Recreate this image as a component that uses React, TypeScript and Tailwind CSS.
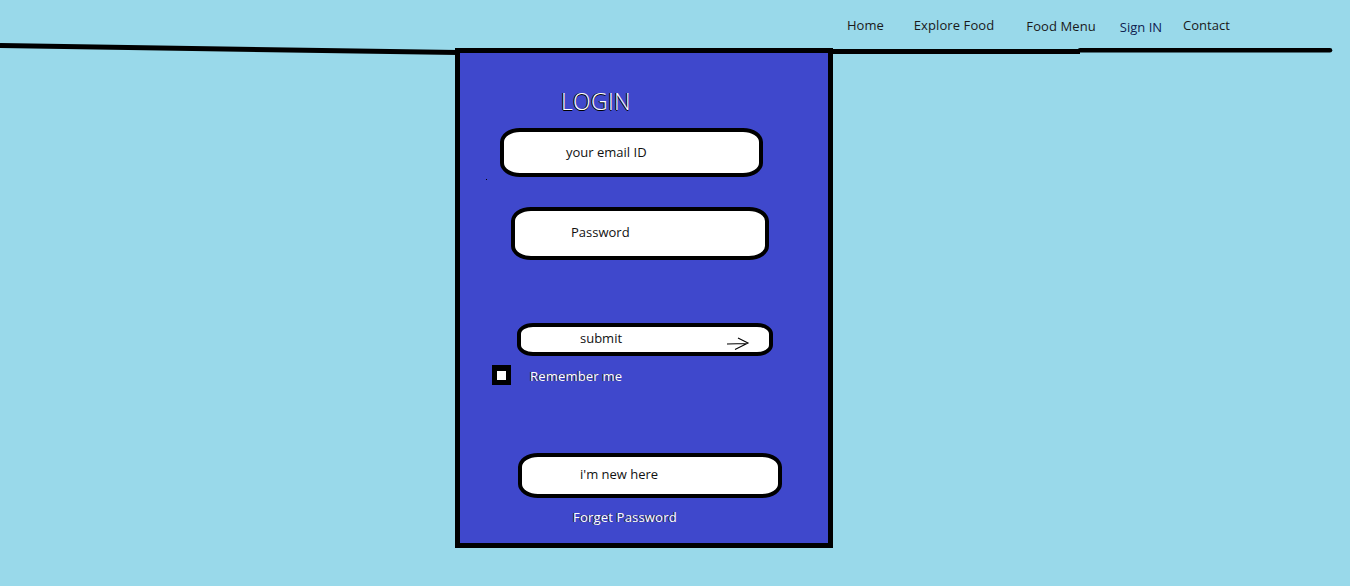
import React from 'react'

const font = { fontFamily: '"Open Sans", "Liberation Sans", sans-serif' }

const navLinks = [
  { label: 'Home', cls: 'pt-4 text-[#1a1a1a]' },
  { label: 'Explore Food', cls: 'ml-[30px] pt-4 tracking-[0.1px] text-[#1a1a1a]' },
  { label: 'Food Menu', cls: 'ml-[32px] pt-[17px] tracking-[0.1px] text-[#1a1a1a]' },
  { label: 'Sign IN', cls: 'ml-[24px] pt-[18px] text-[#0f2150]' },
  { label: 'Contact', cls: 'ml-[21px] pt-4 text-[#1a1a1a]' },
]

function SketchLines() {
  // the hand drawn rule under the nav
  return (
    <svg
      className="pointer-events-none absolute left-0 top-0"
      width="1350"
      height="200"
      viewBox="0 0 1350 200"
    >
      <path d="M0 45.5 L458 52.5" stroke="#000" strokeWidth="5" fill="none" />
      <path d="M832 51.5 L1080 51.5" stroke="#000" strokeWidth="5" fill="none" />
      <path d="M1080 50.3 L1330 50.3" stroke="#000" strokeWidth="4.5" strokeLinecap="round" fill="none" />
      <rect x="486" y="179" width="1" height="1" fill="#000" />
    </svg>
  )
}

function Arrow() {
  return (
    <svg width="24" height="15" viewBox="0 0 24 15" className="block">
      <path
        d="M1 8 L21 7.5 M12 2 L22 7 L9 13.5"
        stroke="#000"
        strokeWidth="1.1"
        fill="none"
      />
    </svg>
  )
}

export default function App() {
  return (
    <div className="relative h-[586px] w-full overflow-hidden bg-[#99D9EA]" style={font}>
      <nav className="flex h-12 pl-[847px] text-[13px] leading-[18px]">
        {navLinks.map((l) => (
          <a key={l.label} className={l.cls}>
            {l.label}
          </a>
        ))}
      </nav>

      <div className="ml-[455px] h-[500px] w-[378px] border-[5px] border-black bg-[#3F48CC]">
        <h1
          className="ml-[101px] mt-[37px] text-[23px] font-light leading-none tracking-[0.3px] text-white [text-shadow:-1px_0_0_#000,0_1px_0_#000]"
          style={font}
        >
          LOGIN
        </h1>

        <div className="ml-[40px] mt-[15px] flex h-[49px] w-[263px] items-center rounded-[20px/14px] border-[4px] border-black bg-white pl-[62px] text-[13px] text-[#111]">
          your email ID
        </div>

        <div className="ml-[51px] mt-[30px] flex h-[53px] w-[258px] items-center rounded-[20px/14px] border-[4px] border-black bg-white pb-[2px] pl-[56px] text-[13px] text-[#111]">
          Password
        </div>

        <button className="ml-[57px] mt-[63px] flex h-[33px] w-[256px] items-center rounded-[16px/11px] border-[4px] border-black bg-white pb-[1px] pl-[59px] text-[13px] text-[#111]">
          <span>submit</span>
          <span className="ml-[104px] mt-[8px]">
            <Arrow />
          </span>
        </button>

        <div className="ml-[32px] mt-[8px] flex items-center">
          <div className="flex h-[20px] w-[19px] items-center justify-center bg-black">
            <div className="h-[9px] w-[9px] bg-white" />
          </div>
          <span className="ml-[19px] mt-[3px] text-[13px] tracking-[0.2px] text-white [text-shadow:-1px_0_0_#222]">
            Remember me
          </span>
        </div>

        <button className="ml-[58px] mt-[66px] flex h-[45px] w-[264px] items-center rounded-[20px/14px] border-[4px] border-black bg-white pl-[58px] text-[13px] text-[#111]">
          i'm new here
        </button>

        <p className="ml-[113px] mt-[10px] text-[13px] leading-[18px] tracking-[0.2px] text-white [text-shadow:-1px_0_0_#222]">
          Forget Password
        </p>
      </div>

      <SketchLines />
    </div>
  )
}
